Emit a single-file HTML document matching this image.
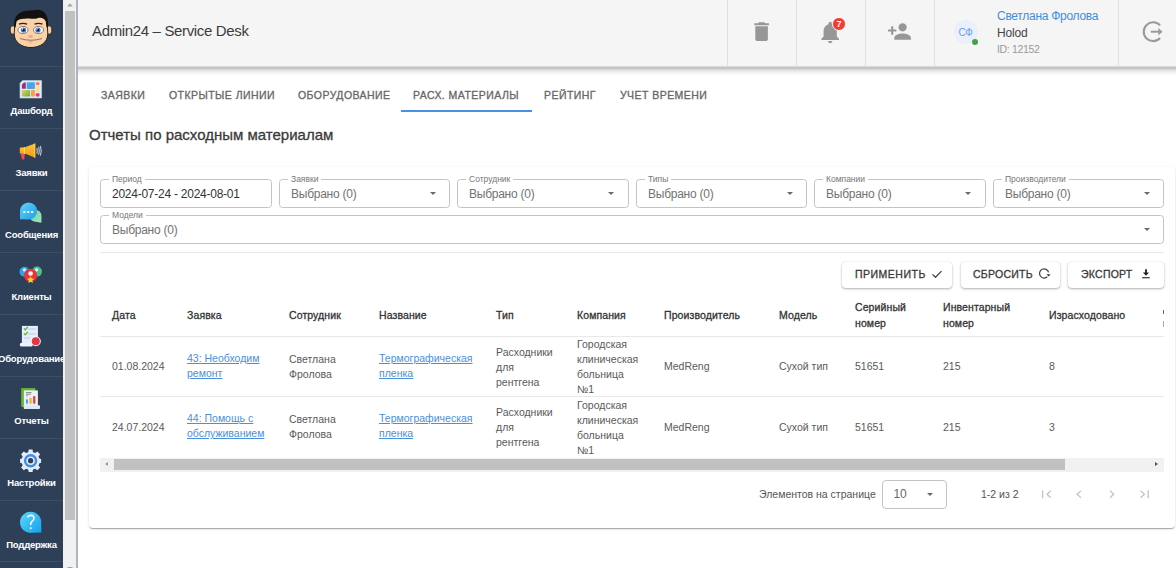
<!DOCTYPE html>
<html><head><meta charset="utf-8">
<style>
*{box-sizing:border-box;margin:0;padding:0}
html,body{width:1176px;height:568px;overflow:hidden;background:#fff;font-family:"Liberation Sans",sans-serif;position:relative}
.a{position:absolute;white-space:nowrap}
#side{left:0;top:0;width:63px;height:568px;background:#2e3f58}
.sep{position:absolute;left:0;width:63px;height:1px;background:#3e4e65}
.stx{position:absolute;left:-10px;width:83px;text-align:center;color:#fff;font-weight:bold;font-size:9.5px;line-height:12px;letter-spacing:-0.2px}
#sb{left:63px;top:0;width:13px;height:568px;background:#f1f1f1}
#thumb{left:65px;top:11px;width:10px;height:509px;background:#c1c1c1}
#bord{left:76px;top:0;width:2px;height:568px;background:#aeb4bd}
#hdr{left:78px;top:0;width:1098px;height:66px;background:#f5f5f5;}
.vl{position:absolute;top:0;width:1px;height:66px;background:#e0e0e0}
.tab{position:absolute;top:88px;font-size:10.5px;letter-spacing:0.45px;color:#666;-webkit-text-stroke:0.3px #666;line-height:14px;white-space:nowrap}
#card{left:89px;top:167px;width:1086px;height:361px;border-radius:4px;background:#fff;box-shadow:0 2px 1px -1px rgba(0,0,0,.17),0 1px 1px 0 rgba(0,0,0,.14),0 1px 3px 0 rgba(0,0,0,.12)}
.fld{position:absolute;height:29px;border:1px solid #c4c4c4;border-radius:3.5px;background:#fff}
.lb{position:absolute;top:-6px;left:8px;padding:0 3px;background:#fff;font-size:8.5px;color:#777;line-height:10px;white-space:nowrap}
.vv{position:absolute;left:11px;top:6.5px;font-size:12px;letter-spacing:-0.25px;color:#737373;line-height:15px;white-space:nowrap}
.arr{position:absolute;width:0;height:0;border-left:3.8px solid transparent;border-right:3.8px solid transparent;border-top:3.8px solid #6a6a6a}
.btn{position:absolute;top:262px;height:26px;border-radius:4px;background:#fff;box-shadow:0 1px 2.5px rgba(0,0,0,.3),0 0 1px rgba(0,0,0,.12)}
.bt{position:absolute;top:5.3px;font-size:10.5px;-webkit-text-stroke:0.3px #3a3a3a;letter-spacing:0.5px;color:#3a3a3a;line-height:14px;white-space:nowrap}
.th{position:absolute;font-size:10.5px;-webkit-text-stroke:0.3px #333;color:#333;line-height:15.5px;letter-spacing:0.1px;white-space:nowrap}
.td{position:absolute;font-size:10.5px;color:#5a5a5a;line-height:15px;white-space:nowrap}
.lnk{color:#4a8fdc;text-decoration:underline;text-underline-offset:0.5px;text-decoration-thickness:1px}
.hl{position:absolute;left:100px;width:1064px;height:1px;background:#e8e8e8}
svg{position:absolute;overflow:visible}
</style></head><body>
<!-- sidebar -->
<div id="side" class="a"></div>
<div class="sep" style="top:66px"></div>
<div class="sep" style="top:128px"></div>
<div class="sep" style="top:190px"></div>
<div class="sep" style="top:252px"></div>
<div class="sep" style="top:314px"></div>
<div class="sep" style="top:376px"></div>
<div class="sep" style="top:438px"></div>
<div class="sep" style="top:500px"></div>
<div class="sep" style="top:561px"></div>

<!-- sidebar icons -->
<svg style="left:0;top:0" width="63" height="568" viewBox="0 0 63 568">
 <defs>
  <linearGradient id="gMsg" x1="0" y1="0" x2="1" y2="1"><stop offset="0" stop-color="#5fd6f7"/><stop offset="1" stop-color="#1e9be9"/></linearGradient>
  <linearGradient id="gGrn" x1="0" y1="0" x2="1" y2="1"><stop offset="0" stop-color="#6fd39a"/><stop offset="1" stop-color="#9de8b8"/></linearGradient>
  <linearGradient id="gHlp" x1="0" y1="0" x2="1" y2="1"><stop offset="0" stop-color="#5fd8f8"/><stop offset="1" stop-color="#12a0ee"/></linearGradient>
  <linearGradient id="gDash" x1="0" y1="0" x2="1" y2="1"><stop offset="0" stop-color="#e1d66a"/><stop offset="1" stop-color="#6aaa3c"/></linearGradient>
  <linearGradient id="gMeg" x1="0" y1="0" x2="0" y2="1"><stop offset="0" stop-color="#ffc23a"/><stop offset="1" stop-color="#ff9a10"/></linearGradient>
 </defs>
 <!-- avatar -->
 <g>
  <ellipse cx="13" cy="30" rx="2.8" ry="4.2" fill="#f6cfa0" stroke="#1a1a1a" stroke-width=".8"/>
  <ellipse cx="49" cy="30" rx="2.8" ry="4.2" fill="#f6cfa0" stroke="#1a1a1a" stroke-width=".8"/>
  <path d="M14.8 26 C14.8 13 22 10.8 31 10.8 C40 10.8 47.3 13 47.3 26 L47.8 34 C47.8 42.5 40 47.5 31 47.5 C22 47.5 14.2 42.5 14.2 34z" fill="#f9d2a6" stroke="#1a1a1a" stroke-width=".9"/>
  <path d="M14.3 28 C13.2 15 19 10.8 31 10.5 C36 10.3 39 9 41.5 10.5 C46.5 13 48.8 18 47.8 28 L46.5 27 L45.8 21.5 C44 18 41 17 37.5 18.2 C33.5 19.6 31 18.2 28.5 18.6 C24 19 19 18.5 16.5 21.5 L15.6 27z" fill="#111"/>
  <path d="M19 24.2 Q23 22.6 27 24.2" fill="none" stroke="#222" stroke-width="1.4"/>
  <path d="M34.5 24.2 Q38.5 22.6 42.5 24.2" fill="none" stroke="#222" stroke-width="1.4"/>
  <ellipse cx="23" cy="30" rx="5" ry="3.6" fill="#fff" stroke="#555" stroke-width=".7"/>
  <ellipse cx="38.5" cy="30" rx="5" ry="3.6" fill="#fff" stroke="#555" stroke-width=".7"/>
  <circle cx="23.5" cy="30" r="2.6" fill="#3d6fd0"/>
  <circle cx="38" cy="30" r="2.6" fill="#3d6fd0"/>
  <circle cx="23.5" cy="30" r="1.2" fill="#111"/>
  <circle cx="38" cy="30" r="1.2" fill="#111"/>
  <circle cx="22.6" cy="29" r=".7" fill="#fff"/><circle cx="37.1" cy="29" r=".7" fill="#fff"/>
  <ellipse cx="30.5" cy="36.5" rx="2.4" ry="1.2" fill="#f0a090"/>
  <path d="M20 38.5 Q31 42 42 38.5" fill="none" stroke="#7a5a40" stroke-width=".8"/>
  <ellipse cx="30.5" cy="42" rx="2.3" ry=".8" fill="#f0a090"/>
 </g>
 <!-- dashboard -->
 <g>
  <path d="M22.5 80.6 H41.6 V98 H20 V83.2z" fill="#dcecfa" stroke="#bcd6ee" stroke-width=".6"/>
  <path d="M21.9 84.5 L24 82.4 H25.8 V88.8 H21.9z" fill="#a23068"/>
  <rect x="26.7" y="82.2" width="8.2" height="6.8" rx=".8" fill="#4aa3e8"/>
  <rect x="35.8" y="82.2" width="3.7" height="2.7" rx=".8" fill="#ff7a40"/>
  <rect x="35.8" y="85.8" width="3.7" height="6.5" rx=".8" fill="#ffe08a"/>
  <rect x="35.8" y="93.2" width="3.7" height="3.4" rx=".8" fill="#f0346e"/>
  <rect x="21.9" y="90" width="8.2" height="6.6" rx=".8" fill="url(#gDash)"/>
  <rect x="31" y="90" width="3.9" height="6.6" rx=".8" fill="#ffa040"/>
 </g>
 <!-- megaphone -->
 <g>
  <path d="M20.7 153.8 L24.8 153.8 L24.3 159.5 L22 159.5z" fill="#f04a50"/>
  <rect x="19.8" y="147.4" width="5.7" height="6.4" rx="1" fill="url(#gMeg)"/>
  <rect x="23.7" y="147.2" width="1.9" height="6.8" fill="#ffe040"/>
  <path d="M25.5 146.9 L35.1 143.5 L35.1 157.7 L25.5 153.8z" fill="url(#gMeg)"/>
  <rect x="34.4" y="143.5" width=".9" height="14.2" fill="#ffe040"/>
  <path d="M36.8 148 Q37.8 150.8 36.8 153.6" fill="none" stroke="#c8ccd4" stroke-width="1.1"/>
  <path d="M38.6 146.8 Q40 150.8 38.6 154.8" fill="none" stroke="#c8ccd4" stroke-width="1.1"/>
  <path d="M40.4 146 Q42 150.8 40.4 155.6" fill="none" stroke="#c8ccd4" stroke-width="1.1"/>
 </g>
 <!-- messages -->
 <g>
  <path d="M29.5 215.8 A6 6 0 1 1 41.5 215.8 L41.4 222.8 L35.5 221.8 A6 6 0 0 1 29.5 215.8z" fill="url(#gGrn)"/>
  <path d="M20 219.2 L20 211 A8.6 8.6 0 1 1 28.6 219.6z" fill="url(#gMsg)"/>
  <rect x="23.4" y="211" width="2" height="2" fill="#fff"/>
  <rect x="27.3" y="211" width="2" height="2" fill="#fff"/>
  <rect x="31.2" y="211" width="2" height="2" fill="#fff"/>
 </g>
 <!-- clients -->
 <g>
  <circle cx="24.5" cy="271.8" r="5" fill="#2ba4e8"/>
  <circle cx="37" cy="271.6" r="5" fill="#4cc08a"/>
  <circle cx="24.4" cy="269.8" r="1.6" fill="#e8f4ff"/>
  <circle cx="36.7" cy="269.8" r="1.6" fill="#e8fff0"/>
  <circle cx="30.6" cy="275.3" r="6.6" fill="#e8343c"/>
  <circle cx="30.6" cy="273.5" r="2.3" fill="#f4f4f8"/>
  <path d="M30.6 276.2 L31.7 278.6 L34.2 278.8 L32.3 280.5 L32.9 283 L30.6 281.7 L28.3 283 L28.9 280.5 L27 278.8 L29.5 278.6z" fill="#ffd820"/>
 </g>
 <!-- equipment -->
 <g>
  <rect x="21.9" y="325.9" width="16" height="17.4" fill="#e6eefc"/>
  <path d="M23.9 328.4 L25.2 329.8 L27.8 327" fill="none" stroke="#5fc02a" stroke-width="1.4"/>
  <path d="M23.9 333.4 L25.2 334.8 L27.8 332" fill="none" stroke="#5fc02a" stroke-width="1.4"/>
  <path d="M28.3 329 H36 M28.3 334 H36 M24 338 H30" stroke="#b0c0e8" stroke-width=".8"/>
  <rect x="19.8" y="342.8" width="13" height="3.8" rx="1.9" fill="#eef2fb"/>
  <circle cx="35.8" cy="341.2" r="5" fill="#f3f6fc"/>
  <circle cx="35.8" cy="341.2" r="4" fill="#e8344a"/>
 </g>
 <!-- reports -->
 <g>
  <rect x="21.2" y="388.1" width="14.2" height="18.8" fill="#6ab830"/>
  <rect x="23.9" y="390.4" width="14" height="16" fill="#eaf1fb"/>
  <rect x="23.7" y="405.3" width="16.3" height="3.7" rx="1" fill="#dfe8f6"/>
  <rect x="26" y="392.2" width="5.5" height=".9" fill="#777"/>
  <rect x="26" y="393.8" width="5" height=".9" fill="#888"/>
  <rect x="26" y="395.4" width="2" height=".9" fill="#999"/>
  <rect x="26" y="399.3" width="2" height="4.4" rx=".8" fill="#4a9ff0"/>
  <rect x="29.4" y="397.7" width="2.3" height="6" rx=".8" fill="#f5b030"/>
  <rect x="33.1" y="396.1" width="2.3" height="7.6" rx=".8" fill="#e8402a"/>
 </g>
 <!-- settings -->
 <g transform="translate(30.6 460.7)">
  <path d="M-1.9 -10.5 H1.9 L2.4 -7.9 L4.6 -7 L6.8 -8.6 L9.5 -5.9 L7.9 -3.7 L8.8 -1.5 L10.5 -1.1 V2.7 L8.8 3.1 L7.9 5.3 L9.5 7.5 L6.8 10.2 L4.6 8.6 L2.4 9.5 L1.9 12 H-1.9 L-2.4 9.5 L-4.6 8.6 L-6.8 10.2 L-9.5 7.5 L-7.9 5.3 L-8.8 3.1 L-10.5 2.7 V-1.1 L-8.8 -1.5 L-7.9 -3.7 L-9.5 -5.9 L-6.8 -8.6 L-4.6 -7 L-2.4 -7.9z" fill="#e4ecfa" transform="translate(0 -0.6)"/>
  <circle cx="0" cy="0" r="5.5" fill="none" stroke="#3e8ee8" stroke-width="2.4"/>
  <circle cx="0" cy="0" r="2.6" fill="#2e3f58"/>
 </g>
 <!-- support -->
 <g>
  <path d="M41.4 532.5 L41.2 523 A10.6 10.6 0 1 0 32 532.8z" fill="url(#gHlp)"/>
  <path d="M27.6 517.6 Q28.5 515.3 31 515.3 Q33.8 515.4 34 518 Q34 520 32 521.3 Q30.7 522.3 30.7 524.2 V525" fill="none" stroke="#fff" stroke-width="1.5"/>
  <rect x="29.9" y="527.3" width="1.6" height="1.8" fill="#fff"/>
 </g>
</svg>

<div class="stx" style="top:105px">Дашборд</div>
<div class="stx" style="top:167px">Заявки</div>
<div class="stx" style="top:229px">Сообщения</div>
<div class="stx" style="top:291px">Клиенты</div>
<div class="stx" style="top:353px">Оборудование</div>
<div class="stx" style="top:415px">Отчеты</div>
<div class="stx" style="top:477px">Настройки</div>
<div class="stx" style="top:539px">Поддержка</div>

<div id="sb" class="a"></div>
<div id="thumb" class="a"></div>
<div id="bord" class="a"></div>
<div class="a" style="left:78px;top:66px;width:1098px;height:10px;background:linear-gradient(#e6e6e6 0px,#c3c3c3 1.5px,#c6c6c6 2.5px,#e0e0e0 4px,#efefef 6px,#f9f9f9 8px,#fff 10px)"></div>

<!-- header -->
<div id="hdr" class="a">
  <div class="a" style="left:14px;top:22px;font-size:15px;letter-spacing:-0.35px;color:#3c3c3c;line-height:18px">Admin24 – Service Desk</div>
  <div class="vl" style="left:649px"></div>
  <div class="vl" style="left:718px"></div>
  <div class="vl" style="left:787px"></div>
  <div class="vl" style="left:856px"></div>
  <div class="vl" style="left:1040px"></div>
</div>


<!-- header icons -->
<svg style="left:749px;top:19.3px" width="25.2" height="25.2" viewBox="0 0 24 24"><path fill="#979797" d="M6 19c0 1.1.9 2 2 2h8c1.1 0 2-.9 2-2V7H6v12zM19 4h-3.5l-1-1h-5l-1 1H5v2h14V4z"/></svg>
<svg style="left:816.6px;top:18.75px" width="26.4" height="26.4" viewBox="0 0 24 24"><path fill="#979797" d="M12 22c1.1 0 2-.9 2-2h-4c0 1.1.89 2 2 2zm6-6v-5c0-3.07-1.64-5.64-4.5-6.32V4c0-.83-.67-1.5-1.5-1.5s-1.5.67-1.5 1.5v.68C7.630 5.36 6 7.92 6 11v5l-2 2v1h16v-1l-2-2z"/></svg>
<div class="a" style="left:832px;top:17px;width:14px;height:14px;border-radius:50%;border:1px solid #fafafa;background:#f03c32;color:#fff;font-size:9px;font-weight:bold;text-align:center;line-height:12px">7</div>
<svg style="left:887.2px;top:19.3px" width="25" height="25" viewBox="0 0 24 24"><path fill="#979797" d="M15 12c2.21 0 4-1.790 4-4s-1.79-4-4-4-4 1.79-4 4 1.79 4 4 4zm-9-2V7H4v3H1v2h3v3h2v-3h3v-2H6zm9 4c-2.67 0-8 1.34-8 4v2h16v-2c0-2.66-5.33-4-8-4z"/></svg>
<div class="a" style="left:953.5px;top:19.8px;width:24px;height:24px;border-radius:50%;background:#e9f0fb"></div>
<div class="a" style="left:953.5px;top:26px;width:24px;text-align:center;font-size:10px;letter-spacing:-0.3px;color:#6d9ee8;line-height:13px">СФ</div>
<div class="a" style="left:972px;top:38.8px;width:6px;height:6px;border-radius:50%;background:#43a047"></div>
<div class="a" style="left:997px;top:9px;font-size:12px;letter-spacing:-0.28px;color:#3f8fe0;line-height:14px">Светлана Фролова</div>
<div class="a" style="left:997px;top:26px;font-size:12px;letter-spacing:-0.2px;color:#444;line-height:14px">Holod</div>
<div class="a" style="left:997px;top:42.5px;font-size:10.5px;letter-spacing:-0.35px;color:#999;line-height:13px">ID: 12152</div>
<svg style="left:1140px;top:19px" width="26" height="26" viewBox="0 0 26 26"><path fill="none" stroke="#9a9a9a" stroke-width="2.1" d="M20.1 6.4 A9.4 9.4 0 1 0 20.1 19"/><path fill="none" stroke="#9a9a9a" stroke-width="2" d="M10.8 12.7 H19"/><path fill="#9a9a9a" d="M18.3 8.9 L22.5 12.7 L18.3 16.5z"/></svg>

<!-- tabs -->
<div class="tab" style="left:101px">ЗАЯВКИ</div>
<div class="tab" style="left:169px">ОТКРЫТЫЕ ЛИНИИ</div>
<div class="tab" style="left:298px">ОБОРУДОВАНИЕ</div>
<div class="tab" style="left:413px">РАСХ. МАТЕРИАЛЫ</div>
<div class="tab" style="left:544px">РЕЙТИНГ</div>
<div class="tab" style="left:620px">УЧЕТ ВРЕМЕНИ</div>
<div class="a" style="left:401px;top:110px;width:131px;height:2px;background:#4a90e2"></div>
<div class="a" style="left:89px;top:126px;font-size:15px;-webkit-text-stroke:0.3px #3a3a3a;color:#3a3a3a;line-height:18px">Отчеты по расходным материалам</div>

<!-- card -->
<div id="card" class="a"></div>
<div class="fld" style="left:100px;top:179px;width:172px"><span class="lb">Период</span><span class="vv" style="color:#333">2024-07-24 - 2024-08-01</span></div>
<div class="fld" style="left:279px;top:179px;width:171px"><span class="lb">Заявки</span><span class="vv">Выбрано (0)</span><i class="arr" style="left:149.8px;top:12.2px"></i></div>
<div class="fld" style="left:457px;top:179px;width:172px"><span class="lb">Сотрудник</span><span class="vv">Выбрано (0)</span><i class="arr" style="left:149.8px;top:12.2px"></i></div>
<div class="fld" style="left:636px;top:179px;width:171px"><span class="lb">Типы</span><span class="vv">Выбрано (0)</span><i class="arr" style="left:149.8px;top:12.2px"></i></div>
<div class="fld" style="left:814px;top:179px;width:172px"><span class="lb">Компании</span><span class="vv">Выбрано (0)</span><i class="arr" style="left:149.8px;top:12.2px"></i></div>
<div class="fld" style="left:993px;top:179px;width:171px"><span class="lb">Производители</span><span class="vv">Выбрано (0)</span><i class="arr" style="left:149.8px;top:12.2px"></i></div>
<div class="fld" style="left:100px;top:215px;width:1064px"><span class="lb">Модели</span><span class="vv">Выбрано (0)</span><i class="arr" style="left:1042.8px;top:12.2px"></i></div>
<div class="hl" style="top:252px"></div>

<div class="btn" style="left:842px;width:110px"><span class="bt" style="left:13px">ПРИМЕНИТЬ</span></div>

<div class="btn" style="left:961px;width:99px"><span class="bt" style="left:12px;letter-spacing:0.25px">СБРОСИТЬ</span></div>
<div class="btn" style="left:1068px;width:96px"><span class="bt" style="left:13px;letter-spacing:0.25px">ЭКСПОРТ</span></div>

<!-- table -->
<div class="th" style="left:112px;top:308px">Дата</div>
<div class="th" style="left:187px;top:308px">Заявка</div>
<div class="th" style="left:289px;top:308px">Сотрудник</div>
<div class="th" style="left:379px;top:308px">Название</div>
<div class="th" style="left:496px;top:308px">Тип</div>
<div class="th" style="left:577px;top:308px">Компания</div>
<div class="th" style="left:664px;top:308px">Производитель</div>
<div class="th" style="left:779px;top:308px">Модель</div>
<div class="th" style="left:855px;top:300px">Серийный<br>номер</div>
<div class="th" style="left:943px;top:300px">Инвентарный<br>номер</div>
<div class="th" style="left:1049px;top:308px">Израсходовано</div>
<div class="hl" style="top:336px"></div>

<div class="td" style="left:112px;top:359px">01.08.2024</div>
<div class="td lnk" style="left:187px;top:351px">43: Необходим<br>ремонт</div>
<div class="td" style="left:289px;top:352px">Светлана<br>Фролова</div>
<div class="td lnk" style="left:379px;top:351px">Термографическая<br>пленка</div>
<div class="td" style="left:496px;top:344.5px">Расходники<br>для<br>рентгена</div>
<div class="td" style="left:577px;top:337px">Городская<br>клиническая<br>больница<br>№1</div>
<div class="td" style="left:664px;top:359px">MedReng</div>
<div class="td" style="left:779px;top:359px">Сухой тип</div>
<div class="td" style="left:855px;top:359px">51651</div>
<div class="td" style="left:943px;top:359px">215</div>
<div class="td" style="left:1049px;top:359px">8</div>
<div class="hl" style="top:396px"></div>

<div class="td" style="left:112px;top:420px">24.07.2024</div>
<div class="td lnk" style="left:187px;top:411px">44: Помощь с<br>обслуживанием</div>
<div class="td" style="left:289px;top:412px">Светлана<br>Фролова</div>
<div class="td lnk" style="left:379px;top:411px">Термографическая<br>пленка</div>
<div class="td" style="left:496px;top:405px">Расходники<br>для<br>рентгена</div>
<div class="td" style="left:577px;top:398px">Городская<br>клиническая<br>больница<br>№1</div>
<div class="td" style="left:664px;top:420px">MedReng</div>
<div class="td" style="left:779px;top:420px">Сухой тип</div>
<div class="td" style="left:855px;top:420px">51651</div>
<div class="td" style="left:943px;top:420px">215</div>
<div class="td" style="left:1049px;top:420px">3</div>

<!-- h scrollbar -->
<div class="a" style="left:100px;top:458px;width:1064px;height:14px;background:#f1f1f1"></div>
<div class="a" style="left:114px;top:459px;width:951px;height:11px;background:#c1c1c1"></div>
<div class="a" style="left:105.3px;top:461.9px;width:0;height:0;border-top:2.9px solid transparent;border-bottom:2.9px solid transparent;border-right:3.7px solid #9a9a9a"></div>
<div class="a" style="left:1155px;top:461.9px;width:0;height:0;border-top:2.9px solid transparent;border-bottom:2.9px solid transparent;border-left:3.7px solid #505050"></div>
<!-- pagination -->
<div class="a" style="left:759px;top:487px;font-size:10.5px;color:#555;line-height:15px">Элементов на странице</div>
<div class="a" style="left:882px;top:479.5px;width:65px;height:29px;border:1px solid #c4c4c4;border-radius:4px"></div>
<div class="a" style="left:893.4px;top:486.7px;font-size:12px;color:#666;line-height:15px">10</div>
<div class="arr" style="left:926.5px;top:493.2px;border-left-width:3.2px;border-right-width:3.2px;border-top-width:3.2px"></div>
<div class="a" style="left:981px;top:487px;font-size:10.5px;color:#555;line-height:15px">1-2 из 2</div>
<svg style="left:0;top:0" width="1176" height="568"><path d="M932.5 274.4 L935.5 277.3 L941.5 271.1" fill="none" stroke="#444" stroke-width="1.3"/><path d="M1047.3 276.8 A4.6 4.6 0 1 1 1048.6 272.4" fill="none" stroke="#444" stroke-width="1.3"/><path d="M1046.6 274.2 L1050.6 274.2 L1048.6 276.6z" fill="#333"/><path d="M1145.1 269.3 H1146.9 V272.5 H1149 L1146 275.7 L1142.9 272.5 H1145.1z" fill="#222"/><rect x="1142.1" y="277.1" width="7.6" height="1.2" fill="#333"/><path d="M1042.6 490.2 V498.3 M1050.8 490.7 L1047.1 494.2 L1050.8 497.8 M1080.9 490.7 L1077.2 494.2 L1080.9 497.8 M1110 490.7 L1113.7 494.2 L1110 497.8 M1140.6 490.7 L1144.4 494.2 L1140.6 497.8 M1148.2 490.2 V498.3" fill="none" stroke="#c6c6c6" stroke-width="1.4"/><path d="M67.2 6.5 L70 3.2 L72.8 6.5z" fill="#a3a3a3"/><path d="M67 567 L70 570 L73 567z" fill="#a3a3a3"/></svg>
<div class="a" style="left:1163px;top:310px;width:1px;height:4px;background:#666"></div><div class="a" style="left:1163px;top:321px;width:1px;height:6px;background:#aaa"></div>
</body></html>
